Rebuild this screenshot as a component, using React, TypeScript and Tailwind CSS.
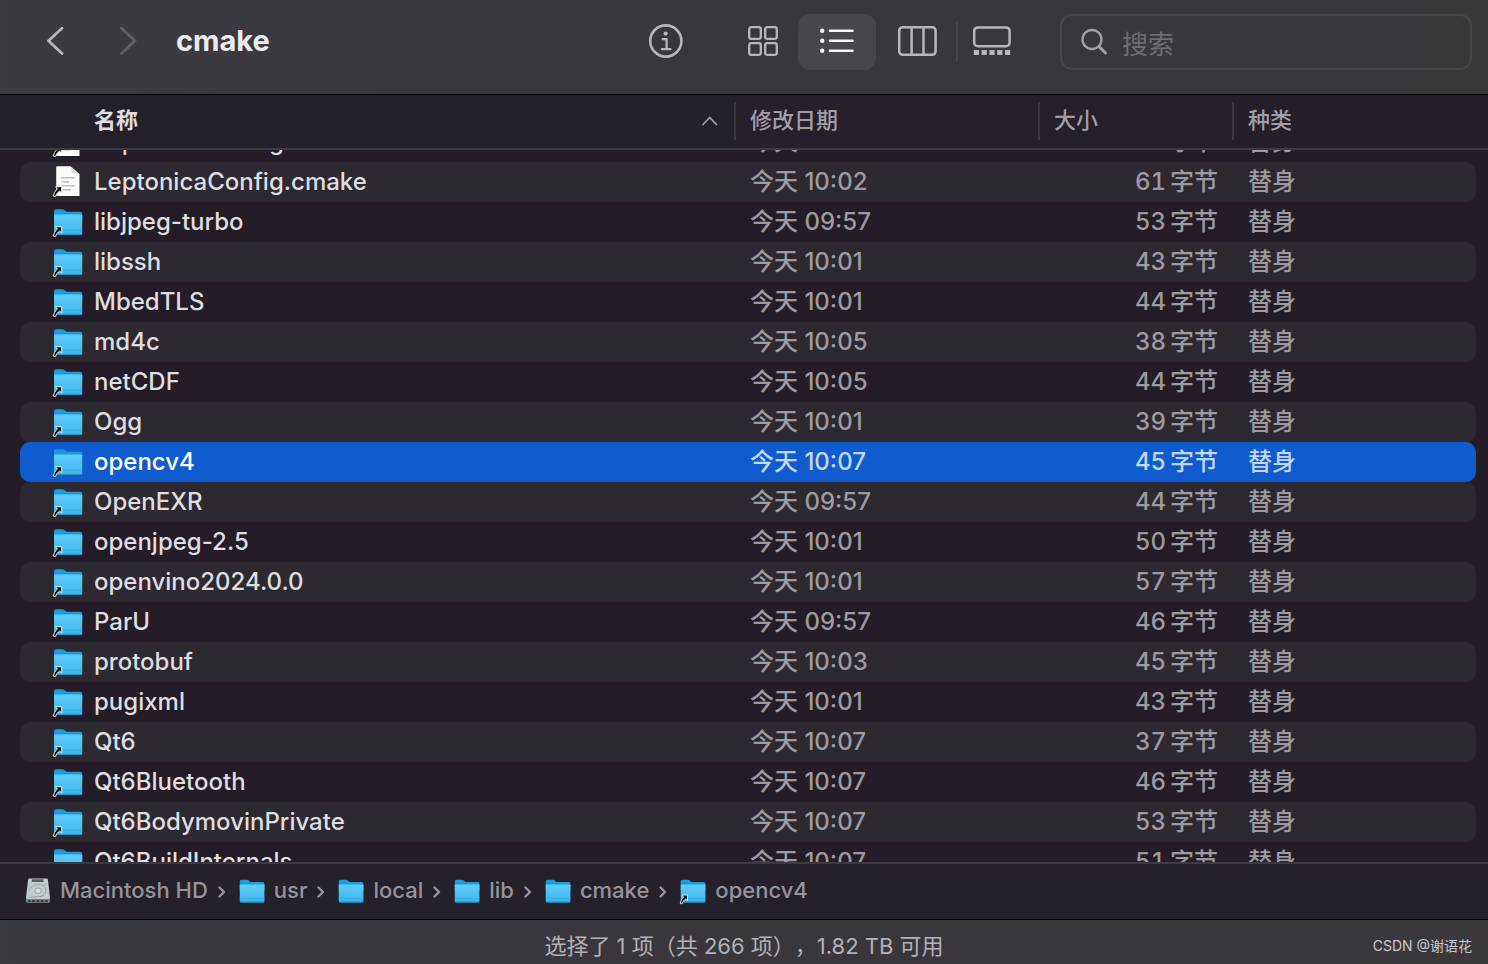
import React, { useLayoutEffect, useRef } from 'react';

type Item = {
  name: string;
  time: string;
  size: number;
  file?: boolean;
};

const items: Item[] = [
  { name: 'LeptonicaConfig-version.cmake', time: '10:02', size: 69, file: true },
  { name: 'LeptonicaConfig.cmake', time: '10:02', size: 61, file: true },
  { name: 'libjpeg-turbo', time: '09:57', size: 53 },
  { name: 'libssh', time: '10:01', size: 43 },
  { name: 'MbedTLS', time: '10:01', size: 44 },
  { name: 'md4c', time: '10:05', size: 38 },
  { name: 'netCDF', time: '10:05', size: 44 },
  { name: 'Ogg', time: '10:01', size: 39 },
  { name: 'opencv4', time: '10:07', size: 45 },
  { name: 'OpenEXR', time: '09:57', size: 44 },
  { name: 'openjpeg-2.5', time: '10:01', size: 50 },
  { name: 'openvino2024.0.0', time: '10:01', size: 57 },
  { name: 'ParU', time: '09:57', size: 46 },
  { name: 'protobuf', time: '10:03', size: 45 },
  { name: 'pugixml', time: '10:01', size: 43 },
  { name: 'Qt6', time: '10:07', size: 37 },
  { name: 'Qt6Bluetooth', time: '10:07', size: 46 },
  { name: 'Qt6BodymovinPrivate', time: '10:07', size: 53 },
  { name: 'Qt6BuildInternals', time: '10:07', size: 51 }
];

const path = ['Macintosh HD', 'usr', 'local', 'lib', 'cmake', 'opencv4'];

const selected = 'opencv4';

const AliasArrow: React.FC = () => (
  <path
    d="M3.600 20.700H9.700V27L7.700 25.100C5.600 26.500 4.200 28.200 3.500 30.700L1.500 30.300C1.600 27.400 3.100 25.100 5.300 22.900Z"
    fill="#111"
    stroke="#ececec"
    strokeWidth="1"
    strokeLinejoin="round"
  />
);

const FolderIcon: React.FC<{ alias?: boolean; className: string }> = ({ alias, className }) => (
  <svg viewBox="0 0 32 32" className={className} aria-hidden="true">
    <path d="M2 5.200Q2 3.200 4 3.200h6.500q1 0 1.800.8l1.200 1q.8.800 1.900.800H28.400q1.800 0 1.800 1.800V15H2z" fill="#1b9bdd" />
    <path d="M2 9.500Q2 8.600 3 8.600h26.200q1 0 1 .9V27.500q0 1.500-1.500 1.500H3.500Q2 29 2 27.500z" fill="url(#folder-front)" />
    <path d="M2 24.300h28.200" stroke="#35a9e0" strokeWidth="0.8" />
    <path d="M2.400 28.600h27.400" stroke="#2387b9" strokeWidth="0.9" />
    {alias && <AliasArrow />}
  </svg>
);

const FileIcon: React.FC<{ className: string }> = ({ className }) => (
  <svg viewBox="0 0 32 32" className={className} aria-hidden="true">
    <path d="M5 .3h13.500l9 8V30H5q-.8 0-.8-.8V1.100Q4.200.3 5 .3z" fill="#fbfbfb" />
    <path d="M18.500.3q1.200 1.200 1.200 4.200 0 3 3 3 3 0 4.800.800z" fill="#dedede" />
    <path d="M9.500 11.800h13M9.500 15.700h7.500M9.500 19.700h13M11 23.700h8" stroke="#bdbdbd" strokeWidth="1.500" />
    <AliasArrow />
  </svg>
);

const DriveIcon: React.FC<{ className: string }> = ({ className }) => (
  <svg viewBox="0 0 28 28" className={className} aria-hidden="true">
    <path d="M2 20.500h24v3.700q0 1.500-1.500 1.500h-21Q2 25.700 2 24.200z" fill="#7e8586" />
    <path d="M5.500 1.500h17q1.200 0 1.400 1.200L26 20.500q0 1.400-1.200 1.400H3.200Q2 21.900 2 20.500L4.100 2.700Q4.300 1.500 5.500 1.500z" fill="#c3cbcc" />
    <path d="M8 2.300h11.500v2.700H7.700z" fill="#555e60" />
    <path d="M4.800 14.500C6 9 10 7.500 14.500 7.500c4.500 0 7.300 2.600 7.300 6 0 3.800-3.200 6.300-8.300 6.300-3.500 0-6 .5-8.500.7" fill="none" stroke="#929c9e" strokeWidth="0.900" />
    <ellipse cx="14" cy="13.800" rx="3.300" ry="2.800" fill="#d5dcdd" stroke="#929c9e" strokeWidth="0.900" />
    <path d="M22.500 6.500L19.500 9" stroke="#929c9e" strokeWidth="0.800" />
    <path d="M4 24h20" stroke="#3b4142" strokeWidth="2" strokeDasharray="3 1.200" />
  </svg>
);

const Toolbar: React.FC = () => (
  <header className="flex h-[95px] shrink-0 items-start border-b border-black bg-linear-to-r from-[#3b3b42] via-[#39363c] to-[#3b383c] pt-3.5 pr-4 pl-7 text-[#b9b5bd]">
    <button type="button" aria-label="后退" className="flex h-14 w-14 items-center justify-center">
      <svg viewBox="0 0 20 30" className="h-[30px] w-5" fill="none" stroke="currentColor" strokeWidth="2.800" strokeLinecap="round" strokeLinejoin="round">
        <path d="M16 1.200L2.500 13.800 16 26.400" />
      </svg>
    </button>
    <button type="button" aria-label="前进" disabled className="ml-4 flex h-14 w-14 items-center justify-center text-[#625f66]">
      <svg viewBox="0 0 20 30" className="h-[30px] w-5" fill="none" stroke="currentColor" strokeWidth="2.800" strokeLinecap="round" strokeLinejoin="round">
        <path d="M3.500 1.200L17 13.800 3.500 26.400" />
      </svg>
    </button>
    <h1 className="ml-5 flex h-14 min-w-0 flex-1 items-center pb-0.5 text-[29px] font-bold text-[#ecebed]">cmake</h1>

    <div className="flex items-center gap-[34px]">
      <button type="button" aria-label="显示简介" className="flex h-14 w-14 items-center justify-center">
        <svg viewBox="0 0 36 36" className="h-9 w-9" fill="none" stroke="currentColor">
          <circle cx="17.800" cy="17" r="15.600" strokeWidth="2.600" />
          <circle cx="17.600" cy="9.600" r="2.100" fill="currentColor" stroke="none" />
          <path d="M14.600 15.200h4v9.800M14 25.200h8.400" strokeWidth="2.300" strokeLinecap="round" strokeLinejoin="round" />
        </svg>
      </button>

      <div className="flex items-center">
        <button type="button" aria-label="图标" className="flex h-14 w-[70px] items-center justify-center">
          <svg viewBox="0 0 32 32" className="h-8 w-8" fill="none" stroke="currentColor" strokeWidth="2.300">
            <rect x="2.200" y="1.200" width="11.600" height="11.600" rx="2" />
            <rect x="18.200" y="1.200" width="11.600" height="11.600" rx="2" />
            <rect x="2.200" y="17.200" width="11.600" height="11.600" rx="2" />
            <rect x="18.200" y="17.200" width="11.600" height="11.600" rx="2" />
          </svg>
        </button>
        <button type="button" aria-label="列表" aria-pressed="true" className="flex h-14 w-[78px] items-center justify-center rounded-xl bg-[#48454b] text-[#f7f6f8]">
          <svg viewBox="0 0 36 32" className="h-8 w-9" fill="none" stroke="currentColor" strokeWidth="2.600" strokeLinecap="round">
            <path d="M11 4.800h22.500M11 14.800h22.500M11 24.800h22.500" />
            <path d="M3.200 4.800h.01M3.200 14.800h.01M3.200 24.800h.01" strokeWidth="4.400" />
          </svg>
        </button>
        <button type="button" aria-label="分栏" className="flex h-14 w-20 items-center justify-center">
          <svg viewBox="0 0 44 32" className="h-8 w-11" fill="none" stroke="currentColor" strokeWidth="2.500">
            <rect x="5.200" y="1.200" width="36.400" height="27.600" rx="3.500" />
            <path d="M17.600 1.200v27.600M29.500 1.200v27.600" />
          </svg>
        </button>
        <div className="h-10 w-0.5 bg-[#464349]" />
        <button type="button" aria-label="画廊" className="flex h-14 w-[68px] items-center justify-center">
          <svg viewBox="0 0 40 32" className="h-8 w-10" fill="none" stroke="currentColor" strokeWidth="2.500">
            <rect x="2.200" y="1.400" width="35.400" height="18.800" rx="3.500" />
            <path d="M1.800 26.400h37" strokeWidth="5" strokeDasharray="5.200 2.600" />
          </svg>
        </button>
      </div>

      <label className="flex h-14 w-[412px] items-center rounded-xl border-2 border-[#48454b] pl-[18px]">
        <svg viewBox="0 0 30 30" className="h-[30px] w-[30px] shrink-0" fill="none" stroke="#a3a0a6" strokeWidth="2.300" strokeLinecap="round">
          <circle cx="12" cy="12.500" r="9.500" />
          <path d="M19 19.700l6.500 6.300" strokeWidth="3" />
        </svg>
        <input
          type="search"
          aria-label="搜索"
          placeholder="搜索"
          className="ml-3 min-w-0 flex-1 bg-transparent pt-1 text-[26px] outline-none placeholder:text-[#6f6c72]"
        />
      </label>
    </div>
  </header>
);

const HeaderLabel: React.FC<{ children: React.ReactNode }> = ({ children }) => (
  <div className="flex h-[38px] items-center border-l-2 border-[#3b3841] pl-3.5">{children}</div>
);

const FileList: React.FC = () => {
  const scroller = useRef<HTMLDivElement>(null);

  useLayoutEffect(() => {
    if (scroller.current) scroller.current.scrollTop = 28;
  }, []);

  return (
    <div ref={scroller} className="min-h-0 flex-1 overflow-y-auto bg-[#241d27] [scrollbar-width:none]">
      <table className="w-full table-fixed border-separate border-spacing-0 text-left text-2xl font-medium whitespace-nowrap">
        <thead className="sticky top-0 z-10 text-[22px] text-[#a19ea6]">
          <tr>
            <th className="h-[55px] border-b-2 border-[#3d3943] bg-[#25212b] p-0 pb-0.5 pl-[94px] font-bold text-[#dedce0]" aria-sort="ascending">
              <div className="flex items-center justify-between pr-4">
                名称
                <svg viewBox="0 0 18 12" className="h-3 w-[18px]" fill="none" stroke="#a19ea6" strokeWidth="1.800" strokeLinecap="round" strokeLinejoin="round">
                  <path d="M3 10.500l6.700-7 6.700 7" />
                </svg>
              </div>
            </th>
            <th className="w-[304px] border-b-2 border-[#3d3943] bg-[#25202b] p-0 pb-0.5 font-medium">
              <HeaderLabel>修改日期</HeaderLabel>
            </th>
            <th className="w-[194px] border-b-2 border-[#3d3943] bg-[#25202a] p-0 pb-0.5 font-medium">
              <HeaderLabel>大小</HeaderLabel>
            </th>
            <th className="w-64 border-b-2 border-[#3d3943] bg-[#241f2a] p-0 pb-0.5 font-medium">
              <HeaderLabel>种类</HeaderLabel>
            </th>
          </tr>
        </thead>
        <tbody>
          {items.map(({ name, time, size, file }, index) => {
            const active = name === selected;
            const fill = active ? 'bg-[#105bce]' : index % 2 === 1 ? 'bg-[#2d2931]' : '';
            const detail = active ? 'text-[#c3d6f3]' : 'text-[#9d9aa0]';
            return (
              <tr key={name} aria-selected={active} className={detail}>
                <td className="p-0 pl-5">
                  <div className={`flex h-10 items-center gap-2.5 rounded-l-[10px] pl-8 ${fill} ${active ? 'text-white' : 'text-[#dfdde0]'}`}>
                    {file ? <FileIcon className="h-8 w-8 shrink-0" /> : <FolderIcon alias className="h-8 w-8 shrink-0" />}
                    {name}
                  </div>
                </td>
                <td className="p-0">
                  <div className={`flex h-10 items-center pl-4 ${fill}`}>今天 {time}</div>
                </td>
                <td className="p-0">
                  <div className={`flex h-10 items-center justify-end gap-1 pr-3.5 tabular-nums ${fill}`}>
                    <span>{size}</span>
                    <span>字节</span>
                  </div>
                </td>
                <td className="p-0 pr-3">
                  <div className={`flex h-10 items-center rounded-r-[10px] pl-4 ${fill}`}>替身</div>
                </td>
              </tr>
            );
          })}
        </tbody>
      </table>
    </div>
  );
};

const PathBar: React.FC = () => (
  <nav aria-label="路径" className="flex h-[58px] shrink-0 items-center border-t-2 border-b border-t-[#3d3943] border-b-black bg-[#25212b] pb-0.5 pl-6 text-[22px] font-medium text-[#97949c]">
    {path.map((name, index) => (
      <React.Fragment key={name}>
        {index > 0 && (
          <svg viewBox="0 0 8 14" className="mr-3 ml-2.5 h-3.5 w-2" fill="none" stroke="currentColor" strokeWidth="2.400" strokeLinecap="round" strokeLinejoin="round" aria-hidden="true">
            <path d="M1.500 3.500L6 8l-4.500 4.500" />
          </svg>
        )}
        <a href={`#${name}`} className="flex items-center gap-2">
          {index === 0 ? <DriveIcon className="h-7 w-7" /> : <FolderIcon alias={name === selected} className="h-7 w-7" />}
          {name}
        </a>
      </React.Fragment>
    ))}
  </nav>
);

export default function App() {
  return (
    <div className="flex h-screen flex-col overflow-hidden font-[Inter,'Noto_Sans_CJK_SC',sans-serif]">
      <svg className="absolute h-0 w-0" aria-hidden="true">
        <defs>
          <linearGradient id="folder-front" x1="0" y1="0" x2="0" y2="1">
            <stop offset="0" stopColor="#5fcdfa" />
            <stop offset="1" stopColor="#3cb4ea" />
          </linearGradient>
        </defs>
      </svg>
      <Toolbar />
      <FileList />
      <PathBar />
      <footer className="relative flex h-11 shrink-0 items-center justify-center bg-linear-to-r from-[#3b3b42] via-[#39363c] to-[#3b383c] pt-2 text-[22px] text-[#b4b1b7]">
        <p className="[text-spacing-trim:space-all]">选择了 1 项（共 266 项），1.82 TB 可用</p>
        <span className="absolute right-4 text-sm text-[#c9c7cb]">CSDN @谢语花</span>
      </footer>
    </div>
  );
}
